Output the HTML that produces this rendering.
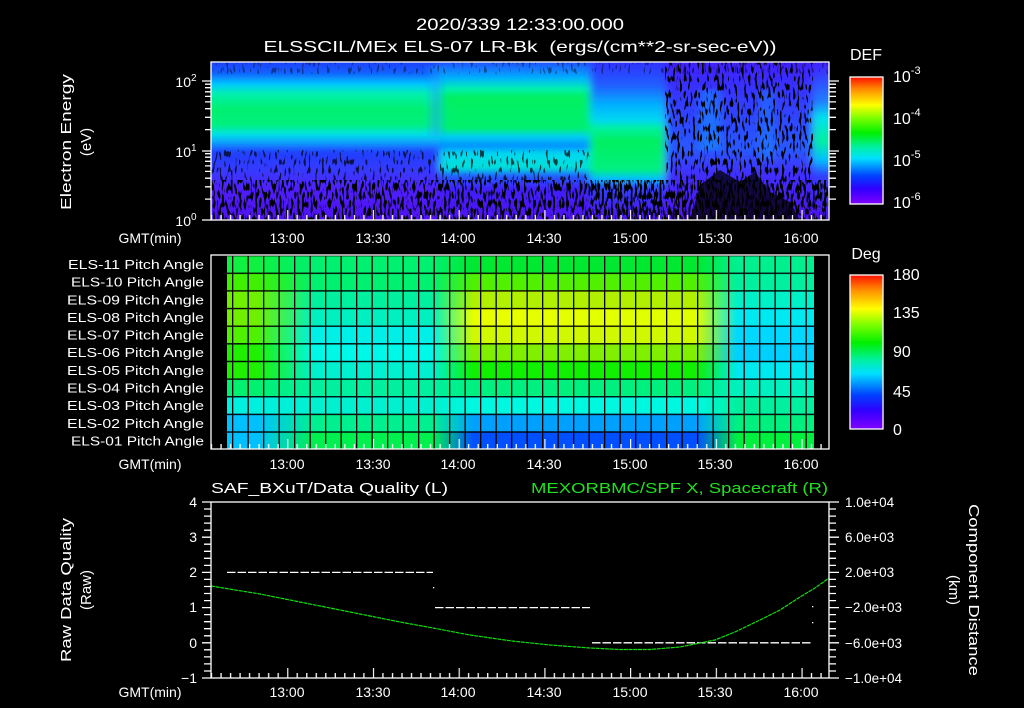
<!DOCTYPE html>
<html><head><meta charset="utf-8"><style>
html,body{margin:0;padding:0;background:#000;}
svg{display:block;}
text{font-family:"Liberation Sans",sans-serif;fill:#fff;}
</style></head><body>
<svg width="1024" height="708" viewBox="0 0 1024 708" xmlns="http://www.w3.org/2000/svg">
<defs>
<clipPath id="clipTop"><rect x="211" y="62" width="618" height="158"/></clipPath>
<filter id="blr" x="-5%" y="-5%" width="110%" height="110%"><feGaussianBlur stdDeviation="4 1.5"/></filter>
<linearGradient id="gA" gradientUnits="userSpaceOnUse" x1="0" y1="62" x2="0" y2="220">
<stop offset="0" stop-color="#2040ff"/><stop offset="0.07" stop-color="#1060ff"/><stop offset="0.14" stop-color="#00c8ff"/><stop offset="0.2" stop-color="#00f0b0"/><stop offset="0.3" stop-color="#00f070"/><stop offset="0.4" stop-color="#00f080"/><stop offset="0.46" stop-color="#00e0e8"/><stop offset="0.52" stop-color="#1090ff"/><stop offset="0.57" stop-color="#2040ff"/><stop offset="0.7" stop-color="#3838ff"/><stop offset="0.8" stop-color="#5020ff"/><stop offset="1" stop-color="#5010f0"/></linearGradient>
<linearGradient id="gB" gradientUnits="userSpaceOnUse" x1="0" y1="62" x2="0" y2="220">
<stop offset="0" stop-color="#2050ff"/><stop offset="0.1" stop-color="#00b0ff"/><stop offset="0.17" stop-color="#00f0b0"/><stop offset="0.22" stop-color="#00f060"/><stop offset="0.42" stop-color="#00f070"/><stop offset="0.47" stop-color="#00d0f0"/><stop offset="0.53" stop-color="#0090ff"/><stop offset="0.58" stop-color="#00d8f0"/><stop offset="0.67" stop-color="#00e0d8"/><stop offset="0.72" stop-color="#2060ff"/><stop offset="0.8" stop-color="#4020ff"/><stop offset="1" stop-color="#5010f0"/></linearGradient>
<linearGradient id="gC" gradientUnits="userSpaceOnUse" x1="0" y1="62" x2="0" y2="220">
<stop offset="0" stop-color="#3030ff"/><stop offset="0.15" stop-color="#2060ff"/><stop offset="0.27" stop-color="#00b0ff"/><stop offset="0.37" stop-color="#00d8f0"/><stop offset="0.42" stop-color="#00f0a0"/><stop offset="0.5" stop-color="#00f060"/><stop offset="0.68" stop-color="#00f080"/><stop offset="0.74" stop-color="#00c0ff"/><stop offset="0.8" stop-color="#3040ff"/><stop offset="1" stop-color="#5010f0"/></linearGradient>
<linearGradient id="gD" gradientUnits="userSpaceOnUse" x1="0" y1="62" x2="0" y2="220">
<stop offset="0" stop-color="#4020ff"/><stop offset="0.3" stop-color="#3040ff"/><stop offset="0.55" stop-color="#2858ff"/><stop offset="0.7" stop-color="#4030ff"/><stop offset="1" stop-color="#5010f0"/></linearGradient>
<linearGradient id="gE" gradientUnits="userSpaceOnUse" x1="0" y1="62" x2="0" y2="220">
<stop offset="0" stop-color="#4020ff"/><stop offset="0.25" stop-color="#2080ff"/><stop offset="0.35" stop-color="#00e0f0"/><stop offset="0.5" stop-color="#00f0a0"/><stop offset="0.62" stop-color="#00c0ff"/><stop offset="0.72" stop-color="#3040ff"/><stop offset="1" stop-color="#5010f0"/></linearGradient>
<linearGradient id="cb1" x1="0" y1="1" x2="0" y2="0">
<stop offset="0" stop-color="#8000ff"/><stop offset="0.12" stop-color="#3000ff"/><stop offset="0.22" stop-color="#0040ff"/><stop offset="0.36" stop-color="#00e0ff"/><stop offset="0.45" stop-color="#00f0a0"/><stop offset="0.56" stop-color="#00f000"/><stop offset="0.68" stop-color="#80ff00"/><stop offset="0.78" stop-color="#ffff00"/><stop offset="0.9" stop-color="#ff9000"/><stop offset="1" stop-color="#ff1000"/></linearGradient>
<filter id="spk" x="0" y="0" width="100%" height="100%"><feTurbulence type="fractalNoise" baseFrequency="0.45 0.12" numOctaves="1" seed="4"/><feColorMatrix type="matrix" values="0 0 0 0 0 0 0 0 0 0 0 0 0 0 0 0 0 0 -14 6.9"/></filter>
<filter id="spk2" x="0" y="0" width="100%" height="100%"><feTurbulence type="fractalNoise" baseFrequency="0.45 0.12" numOctaves="1" seed="9"/><feColorMatrix type="matrix" values="0 0 0 0 0 0 0 0 0 0 0 0 0 0 0 0 0 0 -14 6.3"/></filter>
<filter id="spk3" x="0" y="0" width="100%" height="100%"><feTurbulence type="fractalNoise" baseFrequency="0.45 0.12" numOctaves="1" seed="13"/><feColorMatrix type="matrix" values="0 0 0 0 0 0 0 0 0 0 0 0 0 0 0 0 0 0 -14 5.8"/></filter>
<pattern id="tTop" patternUnits="userSpaceOnUse" x="287.2" y="0" width="85.714" height="708"><path d="M0.5 0v10M10 0v5M19.6 0v5M29.1 0v5M38.6 0v5M48.1 0v5M57.6 0v5M67.2 0v5M76.7 0v5" stroke="#fff" stroke-width="1.3" fill="none"/></pattern>
<pattern id="tBot" patternUnits="userSpaceOnUse" x="287.2" y="0" width="85.714" height="708"><path d="M0.5 708v-10M10 708v-5M19.6 708v-5M29.1 708v-5M38.6 708v-5M48.1 708v-5M57.6 708v-5M67.2 708v-5M76.7 708v-5" stroke="#fff" stroke-width="1.3" fill="none"/></pattern>
<pattern id="pg" patternUnits="userSpaceOnUse" x="232" y="255" width="15.5" height="17.64"><rect x="0" y="0" width="1.3" height="17.64" fill="#000"/><rect x="0" y="0" width="15.5" height="1.3" fill="#000"/></pattern>
<linearGradient id="r11" gradientUnits="userSpaceOnUse" x1="227" x2="814" y1="0" y2="0"><stop offset="0.05" stop-color="#10f040"/><stop offset="0.15" stop-color="#00f070"/><stop offset="0.35" stop-color="#00f070"/><stop offset="0.42" stop-color="#00e830"/><stop offset="0.8" stop-color="#00e830"/><stop offset="0.87" stop-color="#00f090"/></linearGradient>
<linearGradient id="r10" gradientUnits="userSpaceOnUse" x1="227" x2="814" y1="0" y2="0"><stop offset="0.05" stop-color="#40f000"/><stop offset="0.15" stop-color="#00f070"/><stop offset="0.35" stop-color="#00f070"/><stop offset="0.42" stop-color="#50f000"/><stop offset="0.8" stop-color="#50f000"/><stop offset="0.87" stop-color="#00f0a0"/></linearGradient>
<linearGradient id="r09" gradientUnits="userSpaceOnUse" x1="227" x2="814" y1="0" y2="0"><stop offset="0.05" stop-color="#70f000"/><stop offset="0.15" stop-color="#00f0a0"/><stop offset="0.35" stop-color="#00f0a0"/><stop offset="0.42" stop-color="#b0f000"/><stop offset="0.8" stop-color="#b0f000"/><stop offset="0.87" stop-color="#00f0c8"/></linearGradient>
<linearGradient id="r08" gradientUnits="userSpaceOnUse" x1="227" x2="814" y1="0" y2="0"><stop offset="0.05" stop-color="#70f000"/><stop offset="0.15" stop-color="#00f0c0"/><stop offset="0.35" stop-color="#00f0c0"/><stop offset="0.42" stop-color="#e8ff00"/><stop offset="0.8" stop-color="#e0ff00"/><stop offset="0.87" stop-color="#00e8f0"/></linearGradient>
<linearGradient id="r07" gradientUnits="userSpaceOnUse" x1="227" x2="814" y1="0" y2="0"><stop offset="0.05" stop-color="#50f000"/><stop offset="0.15" stop-color="#00f0e8"/><stop offset="0.35" stop-color="#00f0e8"/><stop offset="0.42" stop-color="#d0f800"/><stop offset="0.8" stop-color="#d0f800"/><stop offset="0.87" stop-color="#00d8ff"/></linearGradient>
<linearGradient id="r06" gradientUnits="userSpaceOnUse" x1="227" x2="814" y1="0" y2="0"><stop offset="0.05" stop-color="#20f000"/><stop offset="0.15" stop-color="#00f8e8"/><stop offset="0.35" stop-color="#00f8e8"/><stop offset="0.42" stop-color="#80f000"/><stop offset="0.8" stop-color="#80f000"/><stop offset="0.87" stop-color="#00d0ff"/></linearGradient>
<linearGradient id="r05" gradientUnits="userSpaceOnUse" x1="227" x2="814" y1="0" y2="0"><stop offset="0.05" stop-color="#20f000"/><stop offset="0.15" stop-color="#00f0d0"/><stop offset="0.35" stop-color="#00f0d0"/><stop offset="0.42" stop-color="#10f000"/><stop offset="0.8" stop-color="#10f000"/><stop offset="0.87" stop-color="#00e8f0"/></linearGradient>
<linearGradient id="r04" gradientUnits="userSpaceOnUse" x1="227" x2="814" y1="0" y2="0"><stop offset="0.05" stop-color="#00f070"/><stop offset="0.15" stop-color="#00f0a0"/><stop offset="0.35" stop-color="#00f0a0"/><stop offset="0.42" stop-color="#00f080"/><stop offset="0.8" stop-color="#00f080"/><stop offset="0.87" stop-color="#00f0c0"/></linearGradient>
<linearGradient id="r03" gradientUnits="userSpaceOnUse" x1="227" x2="814" y1="0" y2="0"><stop offset="0.05" stop-color="#00f0e0"/><stop offset="0.15" stop-color="#00f0d0"/><stop offset="0.35" stop-color="#00f0d0"/><stop offset="0.42" stop-color="#00f8e0"/><stop offset="0.8" stop-color="#00f8e0"/><stop offset="0.87" stop-color="#00f0a0"/></linearGradient>
<linearGradient id="r02" gradientUnits="userSpaceOnUse" x1="227" x2="814" y1="0" y2="0"><stop offset="0.05" stop-color="#00c0ff"/><stop offset="0.15" stop-color="#00f090"/><stop offset="0.35" stop-color="#00f090"/><stop offset="0.42" stop-color="#00a0ff"/><stop offset="0.8" stop-color="#00a0ff"/><stop offset="0.87" stop-color="#00f080"/></linearGradient>
<linearGradient id="r01" gradientUnits="userSpaceOnUse" x1="227" x2="814" y1="0" y2="0"><stop offset="0.05" stop-color="#00c0ff"/><stop offset="0.15" stop-color="#00f050"/><stop offset="0.35" stop-color="#00f050"/><stop offset="0.42" stop-color="#0050ff"/><stop offset="0.8" stop-color="#0050ff"/><stop offset="0.87" stop-color="#00f040"/></linearGradient>
</defs>

<text x="520" y="30" font-size="16.5" text-anchor="middle" textLength="208" lengthAdjust="spacingAndGlyphs">2020/339 12:33:00.000</text>
<text x="520" y="52" font-size="16" text-anchor="middle" textLength="513" lengthAdjust="spacingAndGlyphs" xml:space="preserve">ELSSCIL/MEx ELS-07 LR-Bk  (ergs/(cm**2-sr-sec-eV))</text>

<g clip-path="url(#clipTop)">
<g filter="url(#blr)">
<rect x="200" y="55" width="240" height="172" fill="url(#gA)"/>
<rect x="440" y="55" width="150" height="172" fill="url(#gB)"/>
<rect x="590" y="55" width="75" height="172" fill="url(#gC)"/>
<rect x="665" y="55" width="148" height="172" fill="url(#gD)"/>
<rect x="813" y="55" width="26" height="172" fill="url(#gE)"/>
<rect x="430" y="66" width="12" height="70" fill="#10a0ff" opacity="0.5"/>
<rect x="700" y="90" width="20" height="60" fill="#10a0ff" opacity="0.45"/>
<rect x="760" y="90" width="14" height="70" fill="#10a0ff" opacity="0.35"/>
</g>
<rect x="211" y="62" width="618" height="12" filter="url(#spk3)" opacity="0.4"/>
<rect x="211" y="150" width="380" height="30" filter="url(#spk3)" opacity="0.7"/>
<rect x="211" y="180" width="618" height="40" filter="url(#spk)"/>
<rect x="665" y="62" width="148" height="118" filter="url(#spk2)"/>
<rect x="590" y="180" width="239" height="40" filter="url(#spk2)"/>
<path d="M690 220 L700 185 L720 170 L740 182 L755 172 L770 192 L790 202 L800 220 Z" fill="#000" opacity="0.75"/>
</g>

<rect x="211" y="62" width="618" height="158" fill="none" stroke="#fff" stroke-width="1.3"/>
<rect x="211" y="62" width="618" height="11" fill="url(#tTop)"/>
<g transform="translate(0,-488)"><rect x="211" y="698" width="618" height="10" fill="url(#tBot)"/></g>
<path d="M211 220h-9M211 151h-9M211 81h-9M211 199.1h-6M211 186.8h-6M211 178.2h-6M211 171.4h-6M211 165.9h-6M211 161.3h-6M211 157.2h-6M211 153.7h-6M211 129.6h-6M211 117.3h-6M211 108.7h-6M211 101.9h-6M211 96.4h-6M211 91.8h-6M211 87.7h-6M211 84.2h-6" stroke="#fff" stroke-width="1.3"/>
<path d="M829 151h10M829 81h10M829 199.1h7M829 186.8h7M829 178.2h7M829 171.4h7M829 165.9h7M829 161.3h7M829 157.2h7M829 153.7h7M829 129.6h7M829 117.3h7M829 108.7h7M829 101.9h7M829 96.4h7M829 91.8h7M829 87.7h7M829 84.2h7" stroke="#fff" stroke-width="1.3"/>
<text x="186" y="226" font-size="14" text-anchor="middle">10<tspan font-size="10" dy="-6">0</tspan></text>
<text x="186" y="157" font-size="14" text-anchor="middle">10<tspan font-size="10" dy="-6">1</tspan></text>
<text x="186" y="87" font-size="14" text-anchor="middle">10<tspan font-size="10" dy="-6">2</tspan></text>
<text transform="translate(71,142) rotate(-90)" font-size="15" text-anchor="middle" textLength="136" lengthAdjust="spacingAndGlyphs">Electron Energy</text>
<text transform="translate(91,142) rotate(-90)" font-size="15" text-anchor="middle">(eV)</text>
<g font-size="14" text-anchor="middle">
<text x="150" y="243">GMT(min)</text>
<text x="287" y="243">13:00</text><text x="373" y="243">13:30</text><text x="458" y="243">14:00</text><text x="544" y="243">14:30</text><text x="630" y="243">15:00</text><text x="715" y="243">15:30</text><text x="801" y="243">16:00</text>
</g>
<text x="866" y="60" font-size="16" text-anchor="middle">DEF</text>
<rect x="850" y="77" width="33" height="127" fill="url(#cb1)" stroke="#fff" stroke-width="1.3"/>
<g font-size="16"><text x="893" y="82">10<tspan font-size="11" dy="-8">-3</tspan></text><text x="893" y="124">10<tspan font-size="11" dy="-8">-4</tspan></text><text x="893" y="166">10<tspan font-size="11" dy="-8">-5</tspan></text><text x="893" y="208">10<tspan font-size="11" dy="-8">-6</tspan></text></g>

<rect x="227" y="255" width="587" height="17.64" fill="url(#r11)"/>
<rect x="227" y="272.64" width="587" height="17.64" fill="url(#r10)"/>
<rect x="227" y="290.28" width="587" height="17.64" fill="url(#r09)"/>
<rect x="227" y="307.92" width="587" height="17.64" fill="url(#r08)"/>
<rect x="227" y="325.56" width="587" height="17.64" fill="url(#r07)"/>
<rect x="227" y="343.2" width="587" height="17.64" fill="url(#r06)"/>
<rect x="227" y="360.84" width="587" height="17.64" fill="url(#r05)"/>
<rect x="227" y="378.48" width="587" height="17.64" fill="url(#r04)"/>
<rect x="227" y="396.12" width="587" height="17.64" fill="url(#r03)"/>
<rect x="227" y="413.76" width="587" height="17.64" fill="url(#r02)"/>
<rect x="227" y="431.4" width="587" height="17.6" fill="url(#r01)"/>
<rect x="227" y="255" width="587" height="194" fill="url(#pg)"/>
<rect x="211" y="255" width="618" height="194" fill="none" stroke="#fff" stroke-width="1.3"/>
<g transform="translate(0,193)"><rect x="211" y="62" width="618" height="11" fill="url(#tTop)"/></g>
<g transform="translate(0,-259)"><rect x="211" y="698" width="618" height="10" fill="url(#tBot)"/></g>
<g font-size="12.5" text-anchor="end">
<text x="204" y="269" textLength="136" lengthAdjust="spacingAndGlyphs">ELS-11 Pitch Angle</text>
<text x="204" y="286.6" textLength="133" lengthAdjust="spacingAndGlyphs">ELS-10 Pitch Angle</text>
<text x="204" y="304.3" textLength="137" lengthAdjust="spacingAndGlyphs">ELS-09 Pitch Angle</text>
<text x="204" y="321.9" textLength="137" lengthAdjust="spacingAndGlyphs">ELS-08 Pitch Angle</text>
<text x="204" y="339.6" textLength="137" lengthAdjust="spacingAndGlyphs">ELS-07 Pitch Angle</text>
<text x="204" y="357.2" textLength="137" lengthAdjust="spacingAndGlyphs">ELS-06 Pitch Angle</text>
<text x="204" y="374.8" textLength="137" lengthAdjust="spacingAndGlyphs">ELS-05 Pitch Angle</text>
<text x="204" y="392.5" textLength="137" lengthAdjust="spacingAndGlyphs">ELS-04 Pitch Angle</text>
<text x="204" y="410.1" textLength="137" lengthAdjust="spacingAndGlyphs">ELS-03 Pitch Angle</text>
<text x="204" y="427.8" textLength="137" lengthAdjust="spacingAndGlyphs">ELS-02 Pitch Angle</text>
<text x="204" y="445.4" textLength="133" lengthAdjust="spacingAndGlyphs">ELS-01 Pitch Angle</text>
</g>
<g font-size="14" text-anchor="middle">
<text x="150" y="469">GMT(min)</text>
<text x="287" y="469">13:00</text><text x="373" y="469">13:30</text><text x="458" y="469">14:00</text><text x="544" y="469">14:30</text><text x="630" y="469">15:00</text><text x="715" y="469">15:30</text><text x="801" y="469">16:00</text>
</g>
<text x="866" y="259" font-size="16" text-anchor="middle">Deg</text>
<rect x="850" y="275" width="33" height="154" fill="url(#cb1)" stroke="#fff" stroke-width="1.3"/>
<g font-size="16"><text x="893" y="280">180</text><text x="893" y="318">135</text><text x="893" y="357">90</text><text x="893" y="397">45</text><text x="893" y="435">0</text></g>

<text x="211" y="493" font-size="15" textLength="237" lengthAdjust="spacingAndGlyphs">SAF_BXuT/Data Quality (L)</text>
<text x="828" y="493" font-size="15" text-anchor="end" style="fill:#20e020" textLength="297" lengthAdjust="spacingAndGlyphs">MEXORBMC/SPF X, Spacecraft (R)</text>
<path d="M227 572.4H433M435 607.6H590M592 642.8H811" stroke="#fff" stroke-width="1.3" stroke-dasharray="8.5 2"/>
<path d="M211 586 L260 594 L300 602 L350 612 L400 622 L433 628 L470 635 L512 641 L550 645 L590 648 L620 649.5 L650 649.5 L680 647 L700 643 L715 640 L735 632 L760 620 L780 610 L800 597 L815 588 L829 578" stroke="#10e010" stroke-width="1.2" fill="none" stroke-dasharray="4 0.7"/>
<rect x="433" y="587" width="1.3" height="1.3" fill="#fff"/>
<rect x="812" y="606" width="1.3" height="1.3" fill="#fff"/>
<rect x="812" y="622" width="1.3" height="1.3" fill="#fff"/>
<rect x="211" y="502" width="618" height="176" fill="none" stroke="#fff" stroke-width="1.3"/>
<g transform="translate(0,440)"><rect x="211" y="62" width="618" height="11" fill="url(#tTop)"/></g>
<g transform="translate(0,-30)"><rect x="211" y="698" width="618" height="10" fill="url(#tBot)"/></g>
<path d="M211 502h-9M211 537.2h-9M211 572.4h-9M211 607.6h-9M211 642.8h-9M211 678h-9M211 509h-7M211 516.1h-7M211 523.1h-7M211 530.2h-7M211 544.2h-7M211 551.3h-7M211 558.3h-7M211 565.4h-7M211 579.4h-7M211 586.5h-7M211 593.5h-7M211 600.6h-7M211 614.6h-7M211 621.7h-7M211 628.7h-7M211 635.8h-7M211 649.8h-7M211 656.9h-7M211 663.9h-7M211 671h-7" stroke="#fff" stroke-width="1.3"/>
<path d="M829 502h10M829 537.2h10M829 572.4h10M829 607.6h10M829 642.8h10M829 678h10M829 509h7M829 516.1h7M829 523.1h7M829 530.2h7M829 544.2h7M829 551.3h7M829 558.3h7M829 565.4h7M829 579.4h7M829 586.5h7M829 593.5h7M829 600.6h7M829 614.6h7M829 621.7h7M829 628.7h7M829 635.8h7M829 649.8h7M829 656.9h7M829 663.9h7M829 671h7" stroke="#fff" stroke-width="1.3"/>
<g font-size="14" text-anchor="end"><text x="197" y="507">4</text><text x="197" y="542">3</text><text x="197" y="577">2</text><text x="197" y="612">1</text><text x="197" y="648">0</text><text x="197" y="683">−1</text></g>
<g font-size="13.5"><text x="845" y="507">1.0e+04</text><text x="845" y="542">6.0e+03</text><text x="845" y="577">2.0e+03</text><text x="845" y="612">−2.0e+03</text><text x="845" y="648">−6.0e+03</text><text x="845" y="683">−1.0e+04</text></g>
<text transform="translate(71,590) rotate(-90)" font-size="15" text-anchor="middle" textLength="144" lengthAdjust="spacingAndGlyphs">Raw Data Quality</text>
<text transform="translate(91,590) rotate(-90)" font-size="15" text-anchor="middle">(Raw)</text>
<text transform="translate(969,590) rotate(90)" font-size="15" text-anchor="middle" textLength="172" lengthAdjust="spacingAndGlyphs">Component Distance</text>
<text transform="translate(949,590) rotate(90)" font-size="15" text-anchor="middle">(km)</text>
<g font-size="14" text-anchor="middle">
<text x="150" y="697">GMT(min)</text>
<text x="287" y="697">13:00</text><text x="373" y="697">13:30</text><text x="458" y="697">14:00</text><text x="544" y="697">14:30</text><text x="630" y="697">15:00</text><text x="715" y="697">15:30</text><text x="801" y="697">16:00</text>
</g>
</svg>
</body></html>
